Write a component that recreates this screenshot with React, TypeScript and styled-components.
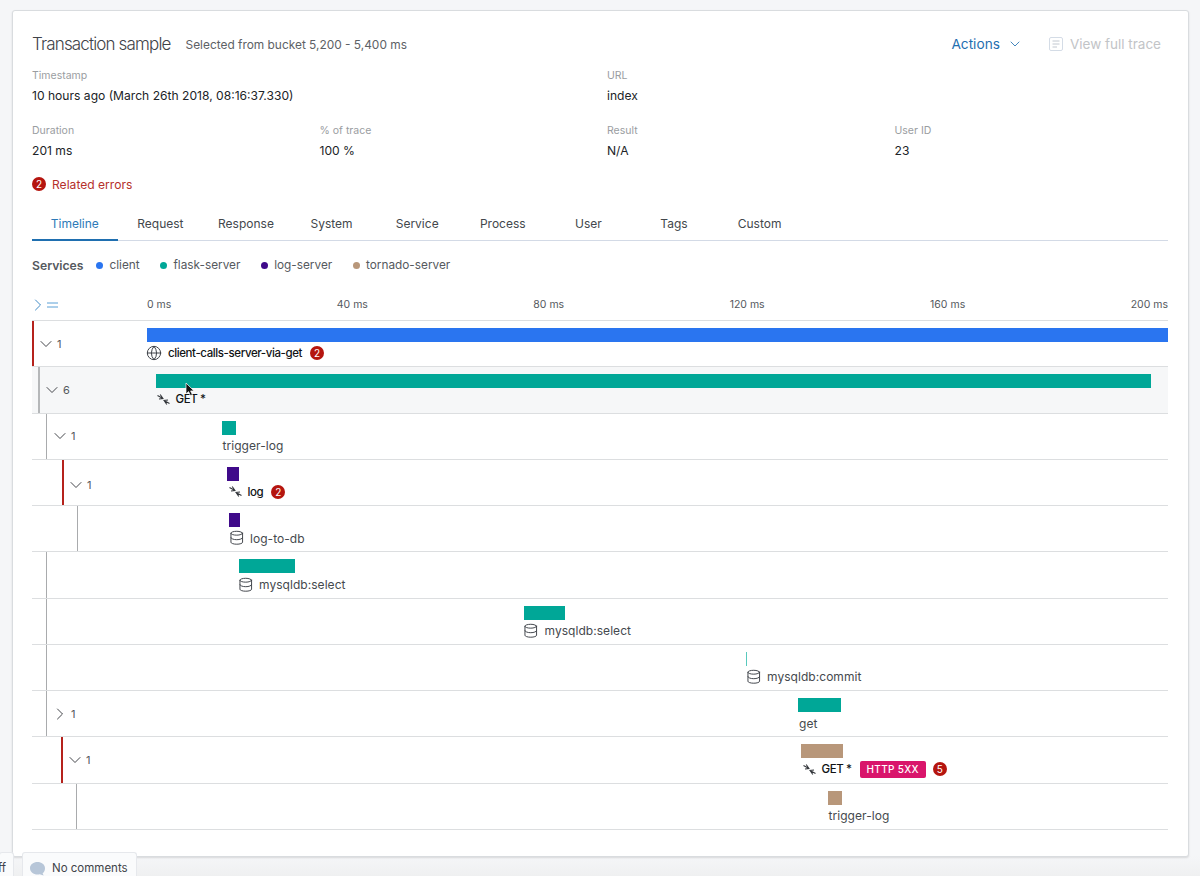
import React from "react";
import styled, { createGlobalStyle } from "styled-components";
import { ChevronDown, ChevronRight, Database, Globe } from "lucide-react";

const GlobalStyle = createGlobalStyle`
  html, body { margin: 0; padding: 0; height: 876px; overflow: hidden; }
  body {
    background: linear-gradient(#f5f6f8 0, #f5f6f8 856px, #eff0f1 876px);
    font-family: Inter, "Liberation Sans", sans-serif;
    color: #2b2f36;
    -webkit-font-smoothing: antialiased;
  }
`;

const Page = styled.div`
  position: relative;
  height: 876px;
  padding: 10px 11px 0 12px;
  box-sizing: border-box;
`;

const Card = styled.section`
  box-sizing: border-box;
  height: 847px;
  padding: 0 20px 0 19px;
  background: #fff;
  border: 1px solid #d9dcdf;
  border-radius: 3px;
  box-shadow: 0 1px 2px rgba(0, 0, 0, 0.12);
`;

const Header = styled.header`
  height: 66px;
  display: flex;
  align-items: center;
`;

const Title = styled.h2`
  margin: 0;
  font-size: 17px;
  font-weight: 300;
  letter-spacing: -0.85px;
  color: #3f4349;
`;

const Subtitle = styled.span`
  margin-left: 15px;
  font-size: 11.9px;
  color: #5d6166;
`;

const HeaderActions = styled.div`
  margin-left: auto;
  display: flex;
  align-items: center;
  padding-right: 7px;
`;

const ActionsButton = styled.span`
  display: flex;
  align-items: center;
  gap: 7px;
  font-size: 13.7px;
  color: #1f6fb0;
`;

const TraceLink = styled.span`
  display: flex;
  align-items: center;
  gap: 7px;
  margin-left: 26px;
  font-size: 13.5px;
  color: #c2c4c7;
`;

const PropGrid = styled.div`
  display: grid;
  grid-template-columns: repeat(4, 287.5px);
  row-gap: 21px;
  margin-top: -8px;
`;

const Prop = styled.div<{ $span?: number }>`
  grid-column: span ${(p) => p.$span ?? 1};
  height: 34px;
`;

const PropLabel = styled.div`
  font-size: 10.5px;
  line-height: 13px;
  color: #9a9da1;
`;

const PropValue = styled.div`
  margin-top: 6px;
  font-size: 12.1px;
  line-height: 15px;
  color: #202327;
`;

const ErrorsLink = styled.div`
  display: flex;
  align-items: center;
  gap: 6px;
  margin-top: 18px;
  height: 16px;
  font-size: 12.1px;
  color: #b5302b;
`;

const Badge = styled.span`
  flex: none;
  width: 14px;
  height: 14px;
  border-radius: 50%;
  background: #b5150f;
  color: #fff;
  font-size: 10px;
  font-weight: 400;
  letter-spacing: 0;
  line-height: 14px;
  text-align: center;
`;

const Tabs = styled.nav`
  display: flex;
  height: 32px;
  margin-top: 16px;
  border-bottom: 1px solid #d3dae6;
  box-sizing: content-box;
`;

const Tab = styled.span<{ $active?: boolean }>`
  width: 85.6px;
  height: 31px;
  text-align: center;
  font-size: 12px;
  line-height: 32px;
  color: ${(p) => (p.$active ? "#2d7ab8" : "#43474c")};
  border-bottom: 2px solid ${(p) => (p.$active ? "#1f6fb0" : "transparent")};
  box-sizing: content-box;
`;

const Legend = styled.div`
  display: flex;
  align-items: center;
  height: 16px;
  margin-top: 16px;
  font-size: 11.8px;
  color: #55595e;
`;

const LegendTitle = styled.span`
  font-size: 12.2px;
  font-weight: 600;
  color: #55595e;
  margin-right: 12.5px;
`;

const LegendItem = styled.span`
  display: flex;
  align-items: center;
  gap: 6.5px;
  margin-right: 20.3px;
`;

const Dot = styled.span<{ $color: string }>`
  width: 7px;
  height: 7px;
  border-radius: 50%;
  background: ${(p) => p.$color};
`;

const AxisRow = styled.div`
  display: flex;
  align-items: flex-end;
  height: 48px;
  padding-bottom: 9px;
  border-bottom: 1px solid #dcdee0;
  box-sizing: border-box;
`;

const AxisToggle = styled.div`
  width: 115px;
  height: 13px;
  flex: none;
  display: flex;
  align-items: center;
  color: #2f7fbf;

  & > svg:first-child {
    margin-left: -4px;
    flex: none;
  }
  & > svg:last-child {
    margin-left: -1px;
    flex: none;
  }
`;

const AxisTicks = styled.div`
  flex: 1;
  display: flex;
  justify-content: space-between;
  font-size: 10.5px;
  line-height: 13px;
  color: #55595e;
`;

const Row = styled.div<{ $hover?: boolean }>`
  display: flex;
  height: 46.25px;
  box-sizing: border-box;
  border-bottom: 1px solid #dcdee0;
  background: ${(p) => (p.$hover ? "#f6f7f8" : "transparent")};
`;

const Gutter = styled.div`
  width: 115px;
  flex: none;
  display: flex;
`;

const Stem = styled.div<{ $indent: number; $color: string; $thick: boolean; $drop?: number }>`
  margin-left: ${(p) => p.$indent}px;
  border-left: ${(p) => (p.$thick ? 2 : 1)}px solid ${(p) => p.$color};
  padding-left: ${(p) => (p.$thick ? 2 : 3)}px;
  padding-top: ${(p) => p.$drop ?? 0}px;
  display: flex;
  align-items: center;
  gap: 1px;
  font-size: 11px;
  color: #55595e;

  & > svg {
    color: #33363b;
  }
`;

const Track = styled.div`
  flex: 1;
  min-width: 0;
  padding-top: 7px;
`;

const Bar = styled.div<{ $color: string }>`
  height: 14px;
  background: ${(p) => p.$color};
`;

const SpanLabel = styled.div<{ $strong: boolean }>`
  display: flex;
  align-items: center;
  height: 14px;
  margin-top: 4px;
  font-size: ${(p) => (p.$strong ? "11.5px" : "12px")};
  letter-spacing: ${(p) => (p.$strong ? "-0.4px" : "0.05px")};
  white-space: nowrap;
  color: ${(p) => (p.$strong ? "#111316" : "#45494e")};
  font-weight: ${(p) => (p.$strong ? 500 : 400)};
`;

const IconSlot = styled.span<{ $width: number }>`
  flex: none;
  display: flex;
  align-items: center;
  width: ${(p) => p.$width}px;
  color: #3f4349;

  & > svg {
    flex: none;
  }
`;

const GlobeIcon = styled(Globe)`
  margin-left: -1.3px;
`;

const DbIcon = styled(Database)`
  margin-left: -1.5px;
`;

const Tag = styled.span`
  margin: 0 -1px 0 8px;
  height: 17px;
  padding: 0 7px;
  border-radius: 2px;
  background: #d9156b;
  color: #fff;
  font-size: 10px;
  font-weight: 500;
  letter-spacing: 0.3px;
  line-height: 17px;
`;

const LabelBadge = styled(Badge)`
  margin-left: 8px;
`;

const Cursor = styled.svg`
  position: absolute;
  left: 185px;
  top: 382px;
`;

const BottomTab = styled.div`
  position: absolute;
  bottom: 0;
  height: 24px;
  box-sizing: border-box;
  display: flex;
  align-items: center;
  padding-top: 7px;
  background: #fafbfc;
  border: 1px solid #e6e8ec;
  border-bottom: none;
  border-radius: 3px 3px 0 0;
  font-size: 11.5px;
  color: #3f4349;
`;

const ToggleTab = styled(BottomTab)`
  left: -1px;
  width: 15px;
  justify-content: flex-end;
  padding-right: 7px;
`;

const CommentsTab = styled(BottomTab)`
  left: 22px;
  width: 115px;
  gap: 7px;
  padding-left: 7px;

  & > svg {
    flex: none;
  }
`;

const RED = "#b5221c";
const GREY = "#a9abad";
const BLUE = "#2a75f0";
const GREEN = "#00a797";
const PURPLE = "#3f0a8a";
const TAN = "#b8977a";

const SCALE = 1021;
const pct = (px: number) => `${(px / SCALE) * 100}%`;

function MergeIcon() {
  return (
    <svg width="13" height="13" viewBox="0 0 13 13" fill="none" stroke="#33363b" strokeWidth="1.05">
      <path d="M0.5 2.5 L6 5.5 M3.2 1.5 L6 5.5 L2 6" />
      <path d="M12.5 10.5 L7 7.5 M9.8 11.5 L7 7.5 L11 7" />
    </svg>
  );
}

function ReportIcon() {
  return (
    <svg width="14" height="14" viewBox="0 0 14 14" fill="none" stroke="#d4dce6" strokeWidth="1">
      <rect x="0.5" y="0.5" width="13" height="13" rx="1.5" />
      <path d="M3.5 4H10.5M3.5 7H10.5M3.5 10H8" stroke="#c2c8d0" />
    </svg>
  );
}

type Span = {
  indent: number;
  line: string;
  thick?: boolean;
  toggle?: "down" | "right";
  count?: number;
  drop?: number;
  hover?: boolean;
  barFrom: number;
  barTo: number;
  color: string;
  labelAt: number;
  icon?: "globe" | "merge" | "db";
  name: string;
  strong?: boolean;
  tag?: string;
  errors?: number;
};

const spans: Span[] = [
  { indent: 0, line: RED, thick: true, toggle: "down", count: 1, barFrom: 0, barTo: 1021, color: BLUE, labelAt: 0, icon: "globe", name: "client-calls-server-via-get", strong: true, errors: 2 },
  { indent: 6, line: "#b5b7b9", thick: true, toggle: "down", count: 6, hover: true, barFrom: 9, barTo: 1004, color: GREEN, labelAt: 10, icon: "merge", name: "GET *", strong: true },
  { indent: 14, line: GREY, toggle: "down", count: 1, barFrom: 75, barTo: 89, color: GREEN, labelAt: 75.5, name: "trigger-log" },
  { indent: 30, line: RED, thick: true, toggle: "down", count: 1, drop: 6, barFrom: 80, barTo: 92, color: PURPLE, labelAt: 82, icon: "merge", name: "log", strong: true, errors: 2 },
  { indent: 45, line: GREY, barFrom: 82, barTo: 93, color: PURPLE, labelAt: 83, icon: "db", name: "log-to-db" },
  { indent: 14, line: GREY, barFrom: 92, barTo: 148, color: GREEN, labelAt: 92, icon: "db", name: "mysqldb:select" },
  { indent: 14, line: GREY, barFrom: 377, barTo: 418, color: GREEN, labelAt: 377.5, icon: "db", name: "mysqldb:select" },
  { indent: 14, line: GREY, barFrom: 599, barTo: 600.5, color: "#58c9bd", labelAt: 600, icon: "db", name: "mysqldb:commit" },
  { indent: 14, line: GREY, toggle: "right", count: 1, barFrom: 651, barTo: 694, color: GREEN, labelAt: 652, name: "get" },
  { indent: 29, line: RED, thick: true, toggle: "down", count: 1, barFrom: 654, barTo: 696, color: TAN, labelAt: 656, icon: "merge", name: "GET *", strong: true, tag: "HTTP 5XX", errors: 5 },
  { indent: 44, line: GREY, barFrom: 681, barTo: 695, color: TAN, labelAt: 681.5, name: "trigger-log" },
];

const tabs = ["Timeline", "Request", "Response", "System", "Service", "Process", "User", "Tags", "Custom"];
const services = [
  { name: "client", color: BLUE },
  { name: "flask-server", color: GREEN },
  { name: "log-server", color: PURPLE },
  { name: "tornado-server", color: TAN },
];
const ticks = ["0 ms", "40 ms", "80 ms", "120 ms", "160 ms", "200 ms"];

function SpanIcon({ kind }: { kind: Span["icon"] }) {
  if (kind === "globe") return <IconSlot $width={21}><GlobeIcon size={16} strokeWidth={1.5} /></IconSlot>;
  if (kind === "db") return <IconSlot $width={20}><DbIcon size={15.5} strokeWidth={1.5} /></IconSlot>;
  if (kind === "merge") return <IconSlot $width={18.5}><MergeIcon /></IconSlot>;
  return null;
}

export default function App() {
  return (
    <Page>
      <GlobalStyle />
      <Card>
        <Header>
          <Title>Transaction sample</Title>
          <Subtitle>Selected from bucket 5,200 - 5,400 ms</Subtitle>
          <HeaderActions>
            <ActionsButton>
              Actions <ChevronDown size={16} strokeWidth={1.25} />
            </ActionsButton>
            <TraceLink>
              <ReportIcon /> View full trace
            </TraceLink>
          </HeaderActions>
        </Header>
        <PropGrid>
          <Prop $span={2}>
            <PropLabel>Timestamp</PropLabel>
            <PropValue>10 hours ago (March 26th 2018, 08:16:37.330)</PropValue>
          </Prop>
          <Prop $span={2}>
            <PropLabel>URL</PropLabel>
            <PropValue>index</PropValue>
          </Prop>
          <Prop>
            <PropLabel>Duration</PropLabel>
            <PropValue>201 ms</PropValue>
          </Prop>
          <Prop>
            <PropLabel>% of trace</PropLabel>
            <PropValue>100 %</PropValue>
          </Prop>
          <Prop>
            <PropLabel>Result</PropLabel>
            <PropValue>N/A</PropValue>
          </Prop>
          <Prop>
            <PropLabel>User ID</PropLabel>
            <PropValue>23</PropValue>
          </Prop>
        </PropGrid>
        <ErrorsLink>
          <Badge>2</Badge>
          Related errors
        </ErrorsLink>
        <Tabs>
          {tabs.map((t, i) => (
            <Tab key={t} $active={i === 0}>{t}</Tab>
          ))}
        </Tabs>
        <Legend>
          <LegendTitle>Services</LegendTitle>
          {services.map((s) => (
            <LegendItem key={s.name}>
              <Dot $color={s.color} />
              {s.name}
            </LegendItem>
          ))}
        </Legend>
        <AxisRow>
          <AxisToggle>
            <ChevronRight size={20} strokeWidth={1.1} />
            <svg width="11" height="6" viewBox="0 0 11 6" stroke="#5aa0d6" strokeWidth="1">
              <path d="M0 1H11M0 5H11" />
            </svg>
          </AxisToggle>
          <AxisTicks>
            {ticks.map((t) => (
              <span key={t}>{t}</span>
            ))}
          </AxisTicks>
        </AxisRow>
        {spans.map((s, i) => (
          <Row key={i} $hover={s.hover}>
            <Gutter>
              <Stem $indent={s.indent} $color={s.line} $thick={!!s.thick} $drop={s.drop}>
                {s.toggle === "down" && <ChevronDown size={20} strokeWidth={1.1} />}
                {s.toggle === "right" && <ChevronRight size={20} strokeWidth={1.1} />}
                {s.count}
              </Stem>
            </Gutter>
            <Track>
              <Bar
                $color={s.color}
                style={{ marginLeft: pct(s.barFrom), width: pct(s.barTo - s.barFrom) }}
              />
              <SpanLabel $strong={!!s.strong} style={{ marginLeft: pct(s.labelAt) }}>
                <SpanIcon kind={s.icon} />
                {s.name}
                {s.tag && <Tag>{s.tag}</Tag>}
                {s.errors && <LabelBadge>{s.errors}</LabelBadge>}
              </SpanLabel>
            </Track>
          </Row>
        ))}
      </Card>
      <Cursor width="11" height="15" viewBox="0 0 11 15">
        <path d="M1 1V12L3.6 9.6L5.4 13.6L7.4 12.7L5.6 8.9H9Z" fill="#111" stroke="#fff" strokeWidth="0.7" />
      </Cursor>
      <ToggleTab>ff</ToggleTab>
      <CommentsTab>
        <svg width="15" height="15" viewBox="0 0 15 15">
          <path d="M7.5 1C11.4 1 15 3.4 15 7.2C15 9.6 14 11.2 12.6 12.2L13.6 14.6L9.8 13.2C9 13.4 8.3 13.5 7.5 13.5C3.4 13.5 0 10.8 0 7.2C0 3.4 3.6 1 7.5 1Z" fill="#b7c6d8" />
        </svg>
        No comments
      </CommentsTab>
    </Page>
  );
}
